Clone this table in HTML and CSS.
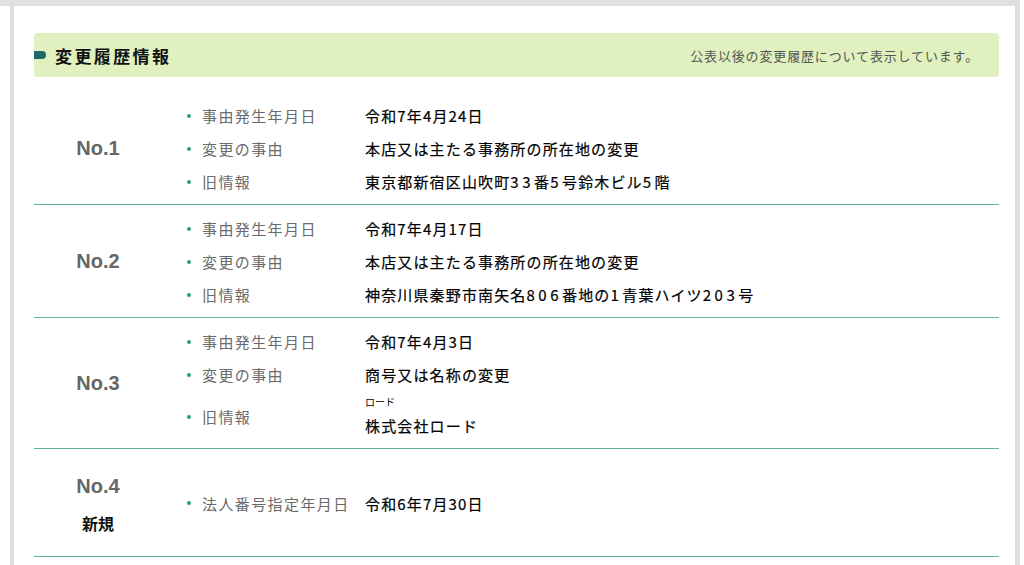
FILE: index.html
```html
<!DOCTYPE html>
<html lang="ja">
<head>
<meta charset="utf-8">
<link rel="stylesheet" href="styles.css">
</head>
<body>
<div class="frame">
  <div class="topbar"></div>
  <div class="panel">
    <div class="head">
      <h2 class="head-title"><span class="marker"></span>変更履歴情報</h2>
      <p class="head-note">公表以後の変更履歴について表示しています。</p>
    </div>

    <div class="row">
      <div class="no"><span class="no-num">No.1</span></div>
      <ul class="items">
        <li class="item"><span class="label">事由発生年月日</span><span class="value">令和7年4月24日</span></li>
        <li class="item"><span class="label">変更の事由</span><span class="value">本店又は主たる事務所の所在地の変更</span></li>
        <li class="item"><span class="label">旧情報</span><span class="value">東京都新宿区山吹町<span class="num">33</span>番<span class="num">5</span>号鈴木ビル<span class="num">5</span>階</span></li>
      </ul>
    </div>

    <div class="row">
      <div class="no"><span class="no-num">No.2</span></div>
      <ul class="items">
        <li class="item"><span class="label">事由発生年月日</span><span class="value">令和7年4月17日</span></li>
        <li class="item"><span class="label">変更の事由</span><span class="value">本店又は主たる事務所の所在地の変更</span></li>
        <li class="item"><span class="label">旧情報</span><span class="value">神奈川県秦野市南矢名<span class="num">806</span>番地の<span class="num">1</span>青葉ハイツ<span class="num">203</span>号</span></li>
      </ul>
    </div>

    <div class="row">
      <div class="no"><span class="no-num">No.3</span></div>
      <ul class="items">
        <li class="item"><span class="label">事由発生年月日</span><span class="value">令和7年4月3日</span></li>
        <li class="item"><span class="label">変更の事由</span><span class="value">商号又は名称の変更</span></li>
        <li class="item"><span class="label">旧情報</span><span class="value value-stack"><span class="kana">ロード</span><span class="kana-base">株式会社ロード</span></span></li>
      </ul>
    </div>

    <div class="row">
      <div class="no no-tall"><span class="no-num">No.4</span><span class="no-new">新規</span></div>
      <ul class="items">
        <li class="item"><span class="label">法人番号指定年月日</span><span class="value">令和6年7月30日</span></li>
      </ul>
    </div>
  </div>
</div>
</body>
</html>
```

FILE: styles.css
```css
html, body {
  margin: 0;
  padding: 0;
  background: #ffffff;
  font-family: "Noto Sans CJK JP", "Noto Sans", sans-serif;
  color: #222;
}

.frame {
  width: 1015px;
  border-right: 5px solid #dedede;
  height: 565px;
  overflow: hidden;
}

.topbar {
  height: 6px;
  background: #e0e0e0;
}

.panel {
  margin-left: 10px;
  border-left: 4px solid #dedede;
  padding: 27px 16px 0 20px;
  height: 600px;
}

.head {
  display: flex;
  align-items: center;
  justify-content: space-between;
  height: 44px;
  background: #e0f1bf;
  border-radius: 4px;
  margin-bottom: 15px;
}

.head-title {
  margin: 0;
  display: flex;
  align-items: center;
  font-size: 17px;
  font-weight: bold;
  letter-spacing: 2.4px;
  color: #111;
}

.marker {
  display: inline-block;
  width: 12px;
  height: 8px;
  background: #1c6b6a;
  border-radius: 0 4px 4px 0;
  margin-right: 9px;
}

.head-note {
  margin: 0 20px 0 0;
  font-size: 13px;
  letter-spacing: 0.85px;
  color: #555;
}

.row {
  display: flex;
  align-items: center;
  padding: 7px 0 6px;
  border-bottom: 1px solid #62b29c;
}

.no {
  width: 128px;
  display: flex;
  flex-direction: column;
  align-items: center;
}

.no-tall {
  padding: 12px 0 8px;
}

.no-num {
  font-family: "Liberation Sans", Arial, sans-serif;
  font-size: 20px;
  font-weight: bold;
  color: #666;
  line-height: 37px;
}

.no-new {
  font-size: 16px;
  font-weight: bold;
  color: #111;
  line-height: 37px;
}

.items {
  list-style: none;
  margin: 0 0 0 25px;
  padding: 0;
}

.item {
  display: flex;
  align-items: center;
  min-height: 33px;
  font-size: 15px;
  letter-spacing: 1.4px;
}

.item::before {
  content: "";
  width: 4px;
  height: 4px;
  border-radius: 50%;
  background: #2e9c7a;
  margin-right: 11px;
  flex: none;
}

.label {
  width: 163px;
  color: #6a6a6a;
  flex: none;
}

.value {
  color: #000;
  font-weight: 400;
  letter-spacing: 1.15px;
  -webkit-text-stroke: 0.2px #000;
}

.num {
  letter-spacing: 3.5px;
}

.value-stack {
  display: flex;
  flex-direction: column;
}

.kana {
  font-size: 10px;
  line-height: 14px;
  letter-spacing: 0;
  padding-top: 4px;
  -webkit-text-stroke: 0;
}

.kana-base {
  line-height: 33px;
}
```
